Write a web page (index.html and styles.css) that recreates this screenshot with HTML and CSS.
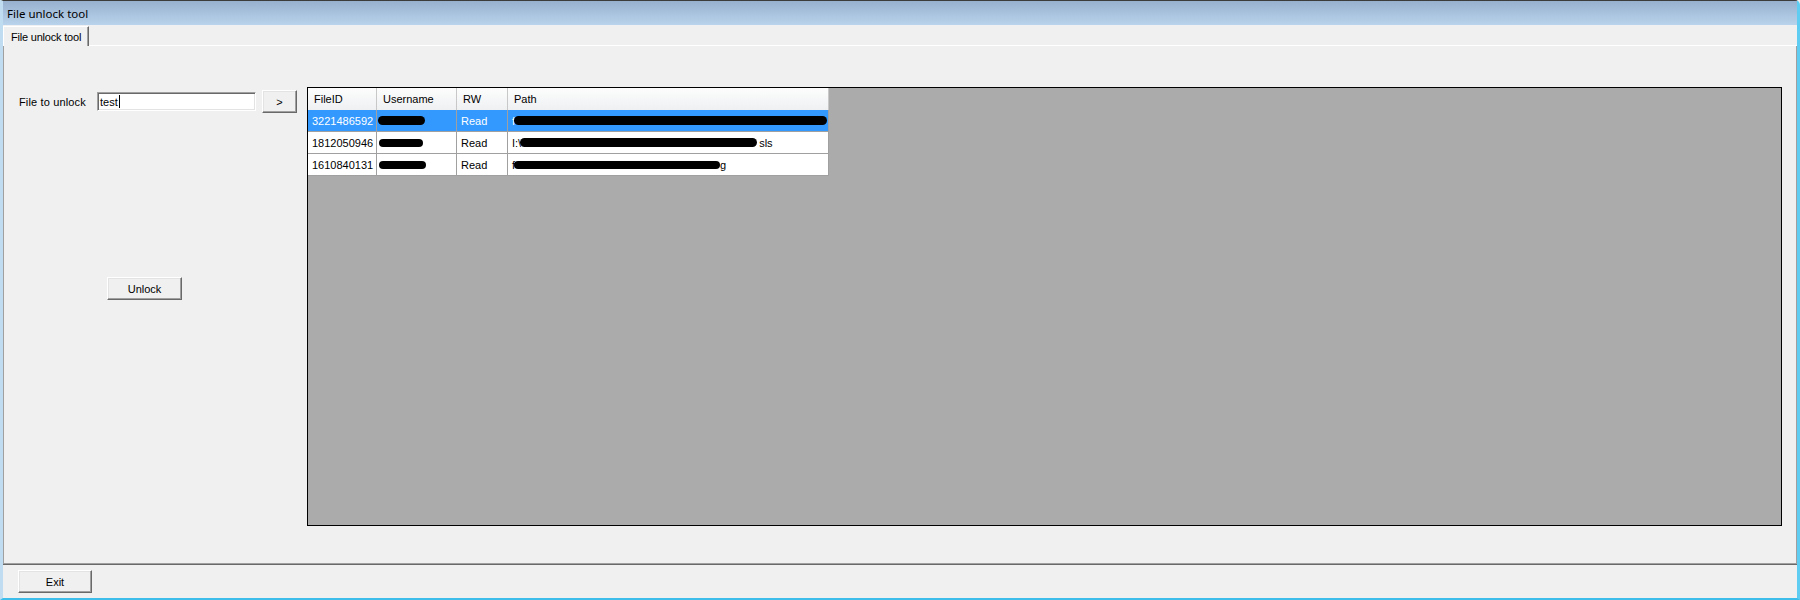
FILE: index.html
```html
<!DOCTYPE html>
<html>
<head>
<meta charset="utf-8">
<title>File unlock tool</title>
<link rel="stylesheet" href="styles.css">
</head>
<body>
<div class="window">
  <div class="titlebar">File unlock tool</div>
  <div class="tabstrip"><div class="tab">File unlock tool</div></div>
  <div class="tabpage">
    <div class="leftpane">
      <div class="filerow">
        <label class="lbl">File to unlock</label>
        <div class="textbox">test<span class="caret"></span></div>
        <button class="btn btn-go">&gt;</button>
      </div>
      <button class="btn btn-unlock">Unlock</button>
    </div>
    <div class="grid">
      <div class="table">
        <div class="th">FileID</div>
        <div class="th">Username</div>
        <div class="th">RW</div>
        <div class="th">Path</div>

        <div class="td sel">3221486592</div>
        <div class="td sel"><span class="redact u1"></span></div>
        <div class="td sel">Read</div>
        <div class="td sel">f<span class="redact p1"></span></div>

        <div class="td">1812050946</div>
        <div class="td"><span class="redact u2"></span></div>
        <div class="td">Read</div>
        <div class="td">I:\<span class="redact p2"></span><span class="tail">sls</span></div>

        <div class="td">1610840131</div>
        <div class="td"><span class="redact u3"></span></div>
        <div class="td">Read</div>
        <div class="td">f<span class="redact p3"></span>g</div>
      </div>
    </div>
  </div>
  <div class="footer"><button class="btn btn-exit">Exit</button></div>
</div>
</body>
</html>
```

FILE: styles.css
```css
html, body {
  margin: 0;
  padding: 0;
}
body {
  width: 1800px;
  height: 600px;
  overflow: hidden;
  background: #f0f0f0;
  font-family: "Liberation Sans", Arial, sans-serif;
  font-size: 11px;
  color: #000;
}
.window {
  box-sizing: border-box;
  height: 600px;
  display: flex;
  flex-direction: column;
  border-top: 1px solid #3c3c3c;
  border-left: 3px solid #bfdcf0;
  border-right: 3px solid #5fcdf2;
  border-bottom: 2px solid #3dbde9;
  border-top-right-radius: 5px;
  background: #f0f0f0;
}
.titlebar {
  flex: none;
  box-sizing: border-box;
  height: 24px;
  padding: 1px 0 0 4px;
  display: flex;
  align-items: center;
  background: linear-gradient(#97b0ce, #bad3ec);
  font-family: "Noto Sans", "Liberation Sans", sans-serif;
  font-size: 11.5px;
  color: #000;
}
.tabstrip {
  flex: none;
  box-sizing: border-box;
  height: 21px;
  display: flex;
  align-items: flex-end;
  border-bottom: 1px solid #ffffff;
}
.tab {
  box-sizing: border-box;
  width: 86px;
  height: 20px;
  margin-bottom: -1px;
  padding-left: 7px;
  display: flex;
  align-items: center;
  background: #f0f0f0;
  border-top: 1px solid #ffffff;
  border-left: 1px solid #ffffff;
  border-right: 1px solid #696969;
  box-shadow: inset -1px 0 0 #a0a0a0;
  letter-spacing: -0.2px;
}
.tabpage {
  flex: 1;
  min-height: 0;
  display: flex;
  padding: 41px 14px 0 0;
  border-left: 1px solid #a0a0a0;
  border-right: 1px solid #a0a0a0;
  border-bottom: 1px solid #a0a0a0;
}
.leftpane {
  flex: none;
  width: 303px;
}
.filerow {
  display: flex;
  align-items: center;
  height: 23px;
  margin-top: 3px;
}
.lbl {
  margin-left: 15px;
  width: 78px;
  letter-spacing: 0.15px;
}
.textbox {
  box-sizing: border-box;
  width: 159px;
  height: 19px;
  padding-left: 2px;
  display: flex;
  align-items: center;
  background: #ffffff;
  border: 1px solid;
  border-color: #a0a0a0 #ffffff #ffffff #a0a0a0;
  box-shadow: inset 1px 1px 0 #696969, inset -1px -1px 0 #e3e3e3;
}
.caret {
  display: inline-block;
  width: 1px;
  height: 13px;
  margin-left: 1px;
  background: #000;
}
.btn {
  box-sizing: border-box;
  padding: 0;
  font-family: "Liberation Sans", Arial, sans-serif;
  font-size: 11px;
  color: #000;
  background: #f0f0f0;
  border: 1px solid;
  border-color: #ffffff #696969 #696969 #ffffff;
  box-shadow: inset -1px -1px 0 #a0a0a0, inset 1px 1px 0 #e3e3e3;
}
.btn-go {
  margin-left: 6px;
  width: 35px;
  height: 23px;
}
.btn-unlock {
  display: block;
  margin: 164px 0 0 103px;
  width: 75px;
  height: 23px;
}
.grid {
  flex: none;
  box-sizing: border-box;
  width: 1475px;
  height: 439px;
  border: 1px solid #000;
  background: #ababab;
}
.table {
  display: grid;
  grid-template-columns: 69px 80px 51px 321px;
  width: 521px;
}
.th {
  box-sizing: border-box;
  height: 22px;
  padding-left: 6px;
  display: flex;
  align-items: center;
  background: linear-gradient(#fdfdfd, #eef0f2);
  border-right: 1px solid #c8c8c8;
}
.td {
  box-sizing: border-box;
  height: 22px;
  padding-left: 4px;
  display: flex;
  align-items: center;
  white-space: nowrap;
  overflow: hidden;
  background: #ffffff;
  border-right: 1px solid #a0a0a0;
  border-bottom: 1px solid #a0a0a0;
}
.td.sel {
  background: #3399ff;
  color: #ffffff;
}
.redact {
  display: inline-block;
  flex: none;
  background: #000;
  border-radius: 5px;
  height: 9px;
}
.u1 { width: 47px; margin-left: -3px; }
.u2 { width: 44px; height: 8px; margin-left: -2px; }
.u3 { width: 47px; height: 8px; margin-left: -2px; }
.p1 { width: 313px; margin-left: -1px; }
.p2 { width: 237px; margin-left: -1px; }
.p3 { width: 206px; height: 8px; margin-left: -1px; }
.tail { margin-left: 2px; }
.footer {
  flex: none;
  box-sizing: border-box;
  height: 34px;
  padding: 5px 0 0 15px;
  border-top: 1px solid #696969;
}
.btn-exit {
  width: 74px;
  height: 23px;
}
```
